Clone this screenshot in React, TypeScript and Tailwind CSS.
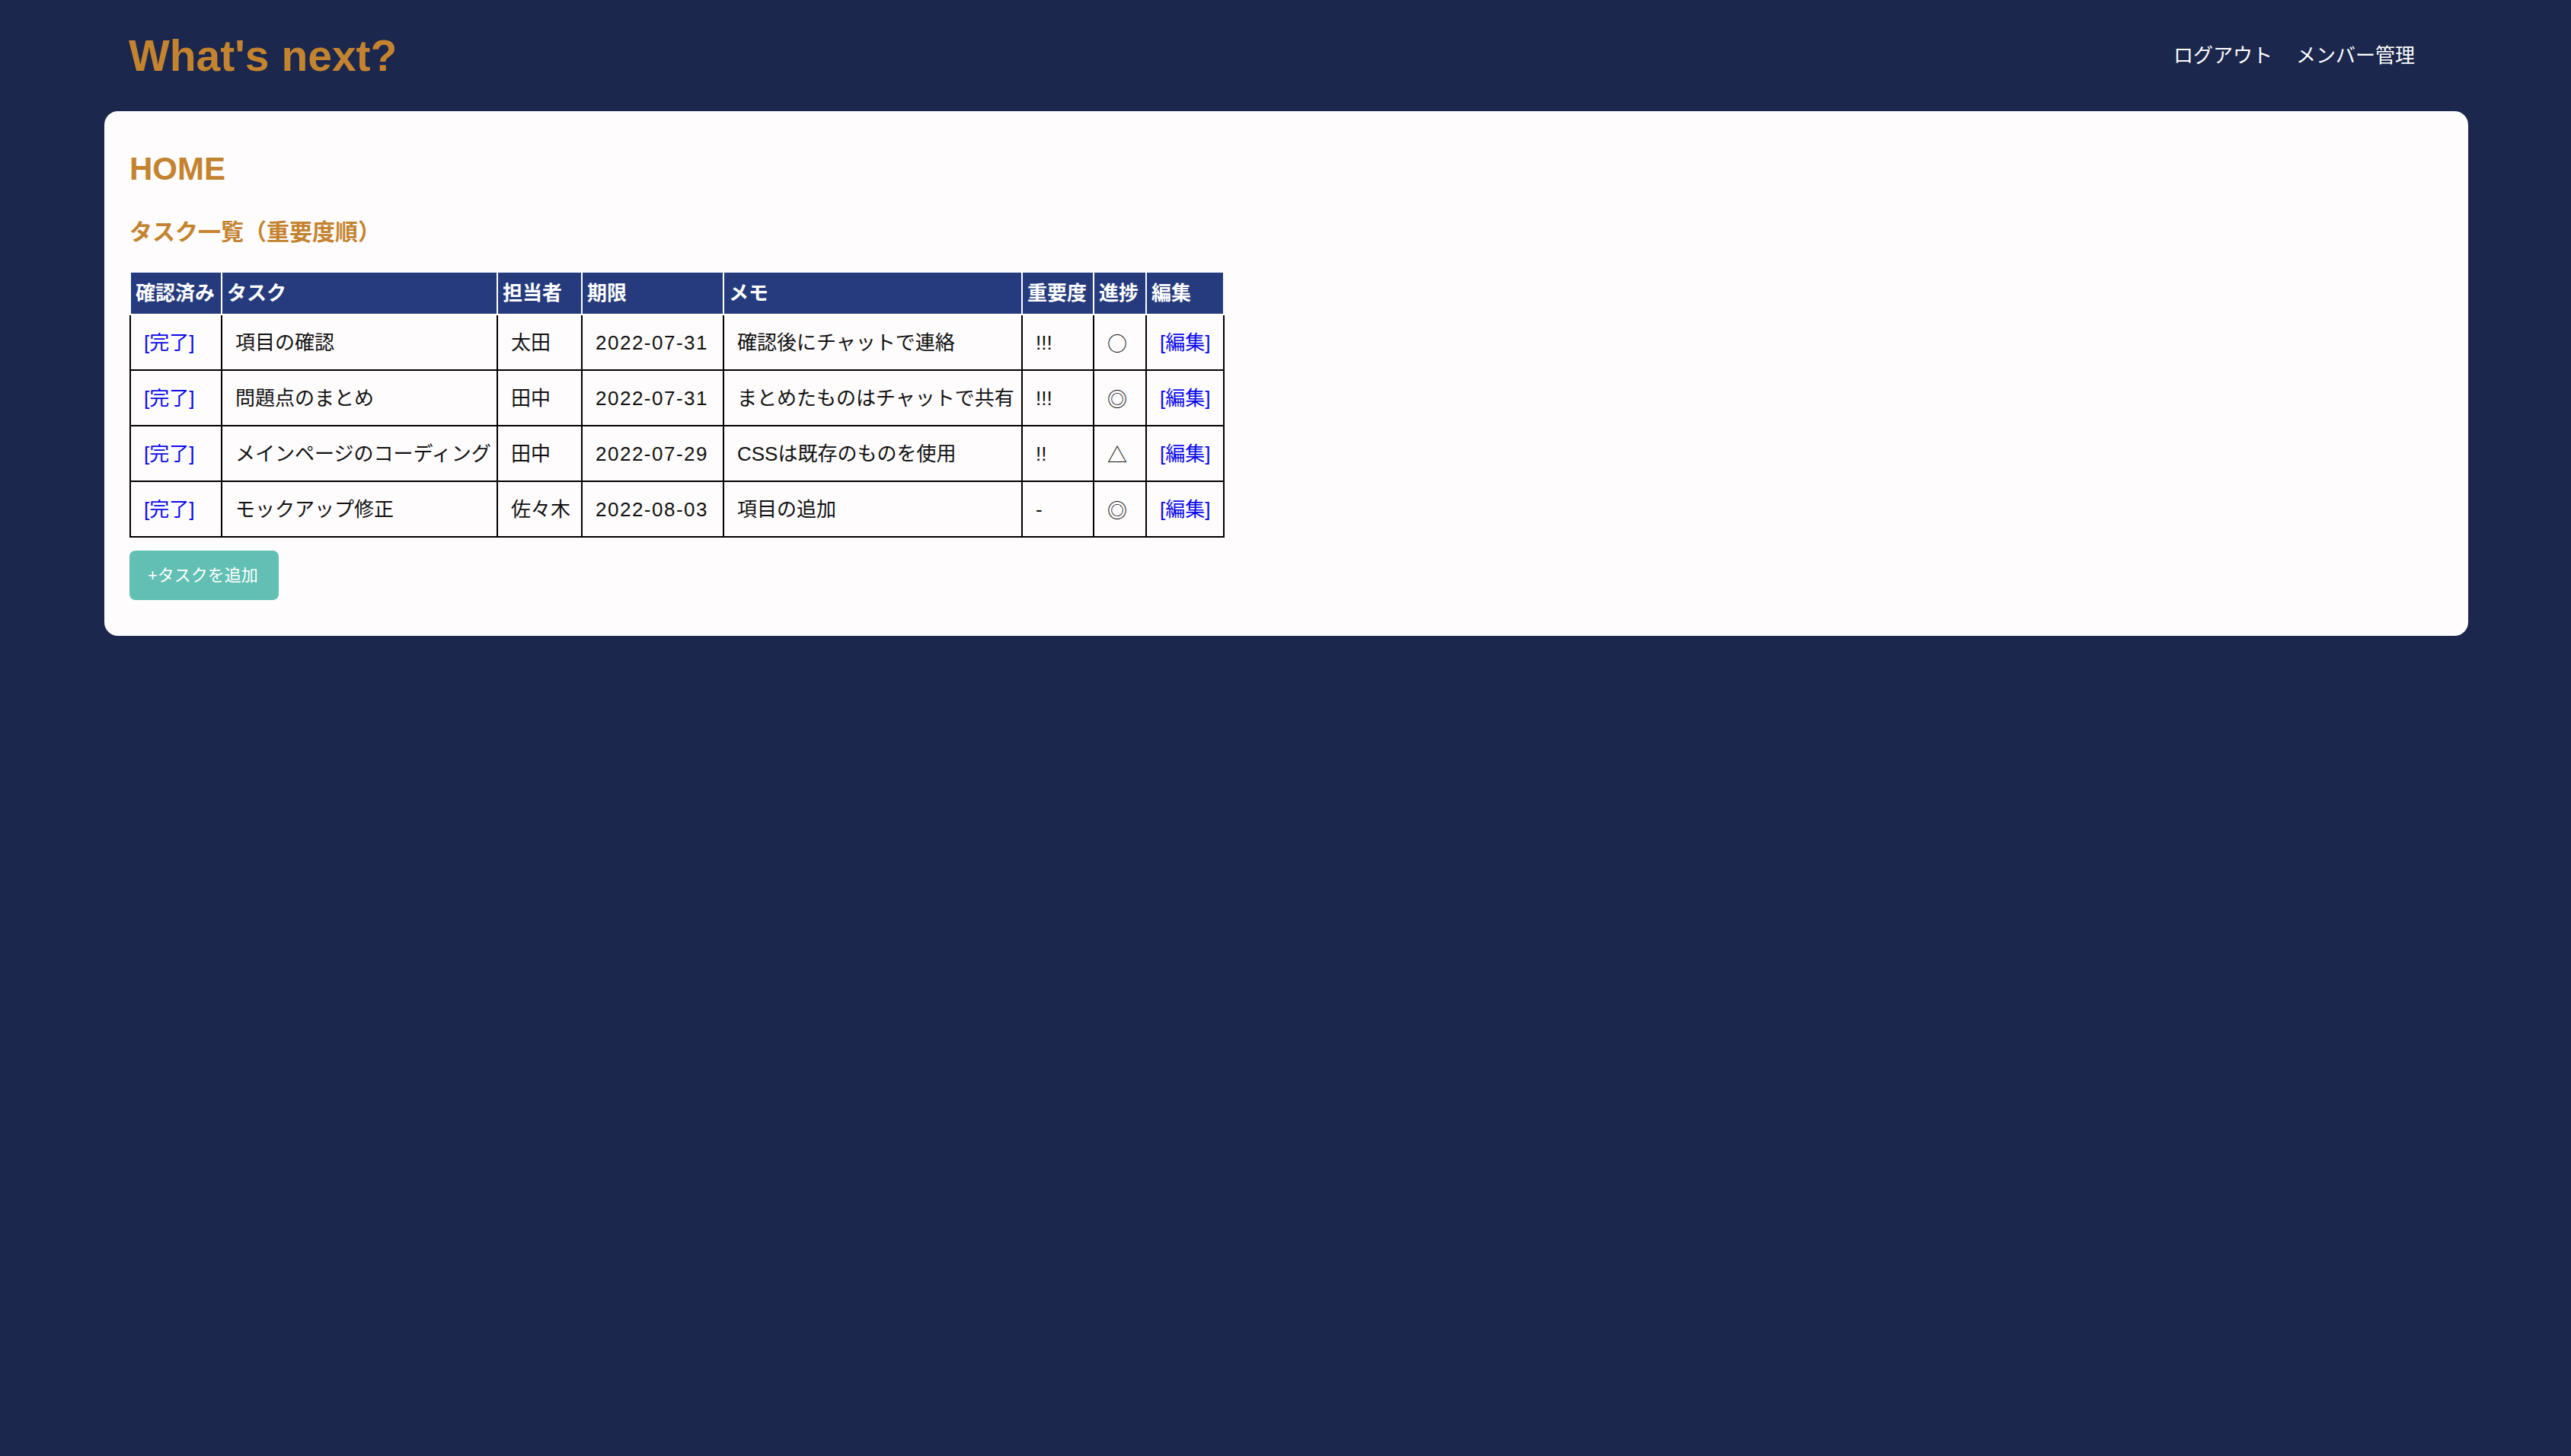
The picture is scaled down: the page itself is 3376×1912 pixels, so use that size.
import React from "react";

type Row = {
  task: string;
  person: string;
  due: string;
  memo: string;
  priority: string;
  progress: string;
};

const rows: Row[] = [
  { task: "項目の確認", person: "太田", due: "2022-07-31", memo: "確認後にチャットで連絡", priority: "!!!", progress: "○" },
  { task: "問題点のまとめ", person: "田中", due: "2022-07-31", memo: "まとめたものはチャットで共有", priority: "!!!", progress: "◎" },
  { task: "メインページのコーディング", person: "田中", due: "2022-07-29", memo: "CSSは既存のものを使用", priority: "!!", progress: "△" },
  { task: "モックアップ修正", person: "佐々木", due: "2022-08-03", memo: "項目の追加", priority: "-", progress: "◎" },
];

const headers = ["確認済み", "タスク", "担当者", "期限", "メモ", "重要度", "進捗", "編集"];

const thCls =
  "h-[56px] border-2 border-white bg-[#253b7d] px-[6px] text-left align-middle text-[26px] font-bold leading-none text-white whitespace-nowrap";
const tdCls =
  "h-[73px] border-2 border-black pl-[17px] pr-[6px] align-middle text-[26px] leading-none text-[#111] whitespace-nowrap";

export default function App() {
  return (
    <div
      className="min-h-screen bg-[#1b274c] pb-10"
      style={{ fontFamily: '"Liberation Sans", "Noto Sans CJK JP", sans-serif' }}
    >
      <header className="flex h-[146px] items-center justify-between pl-[169px] pr-[205px]">
        <h1 className="text-[57px] font-bold leading-none text-[#c4832f]">What's next?</h1>
        <nav className="flex items-center gap-[31px] text-[26px] leading-none text-white">
          <a>ログアウト</a>
          <a>メンバー管理</a>
        </nav>
      </header>

      <main className="ml-[137px] w-[3104px] rounded-[18px] bg-[#fefcfd] pb-[47px] pl-[33px] pt-[55px]">
        <h2 className="text-[42px] font-bold leading-none text-[#c4832f]">HOME</h2>
        <h3 className="mt-[47px] text-[30px] font-bold leading-none text-[#c4832f]">
          タスク一覧（重要度順）
        </h3>

        <table className="mt-[36px] w-[1436px] table-fixed border-collapse">
          <colgroup>
            <col className="w-[120px]" />
            <col className="w-[362px]" />
            <col className="w-[111px]" />
            <col className="w-[186px]" />
            <col className="w-[392px]" />
            <col className="w-[94px]" />
            <col className="w-[69px]" />
            <col className="w-[102px]" />
          </colgroup>
          <thead>
            <tr>
              {headers.map((h) => (
                <th key={h} className={thCls}>
                  {h}
                </th>
              ))}
            </tr>
          </thead>
          <tbody>
            {rows.map((r, i) => (
              <tr key={i}>
                <td className={tdCls}>
                  <a className="text-[#0a0aee]">[完了]</a>
                </td>
                <td className={tdCls}>{r.task}</td>
                <td className={tdCls}>{r.person}</td>
                <td className={tdCls + " tracking-[1.5px]"}>{r.due}</td>
                <td className={tdCls}>{r.memo}</td>
                <td className={tdCls}>{r.priority}</td>
                <td className={tdCls + " [font-family:'Noto_Sans_CJK_JP',sans-serif]"}>{r.progress}</td>
                <td className={tdCls}>
                  <a className="text-[#0a0aee]">[編集]</a>
                </td>
              </tr>
            ))}
          </tbody>
        </table>

        <button className="mt-[17px] flex h-[65px] w-[196px] items-center rounded-[8px] bg-[#62bfb3] pl-[24px] text-[22px] leading-none text-white">
          +タスクを追加
        </button>
      </main>
    </div>
  );
}
